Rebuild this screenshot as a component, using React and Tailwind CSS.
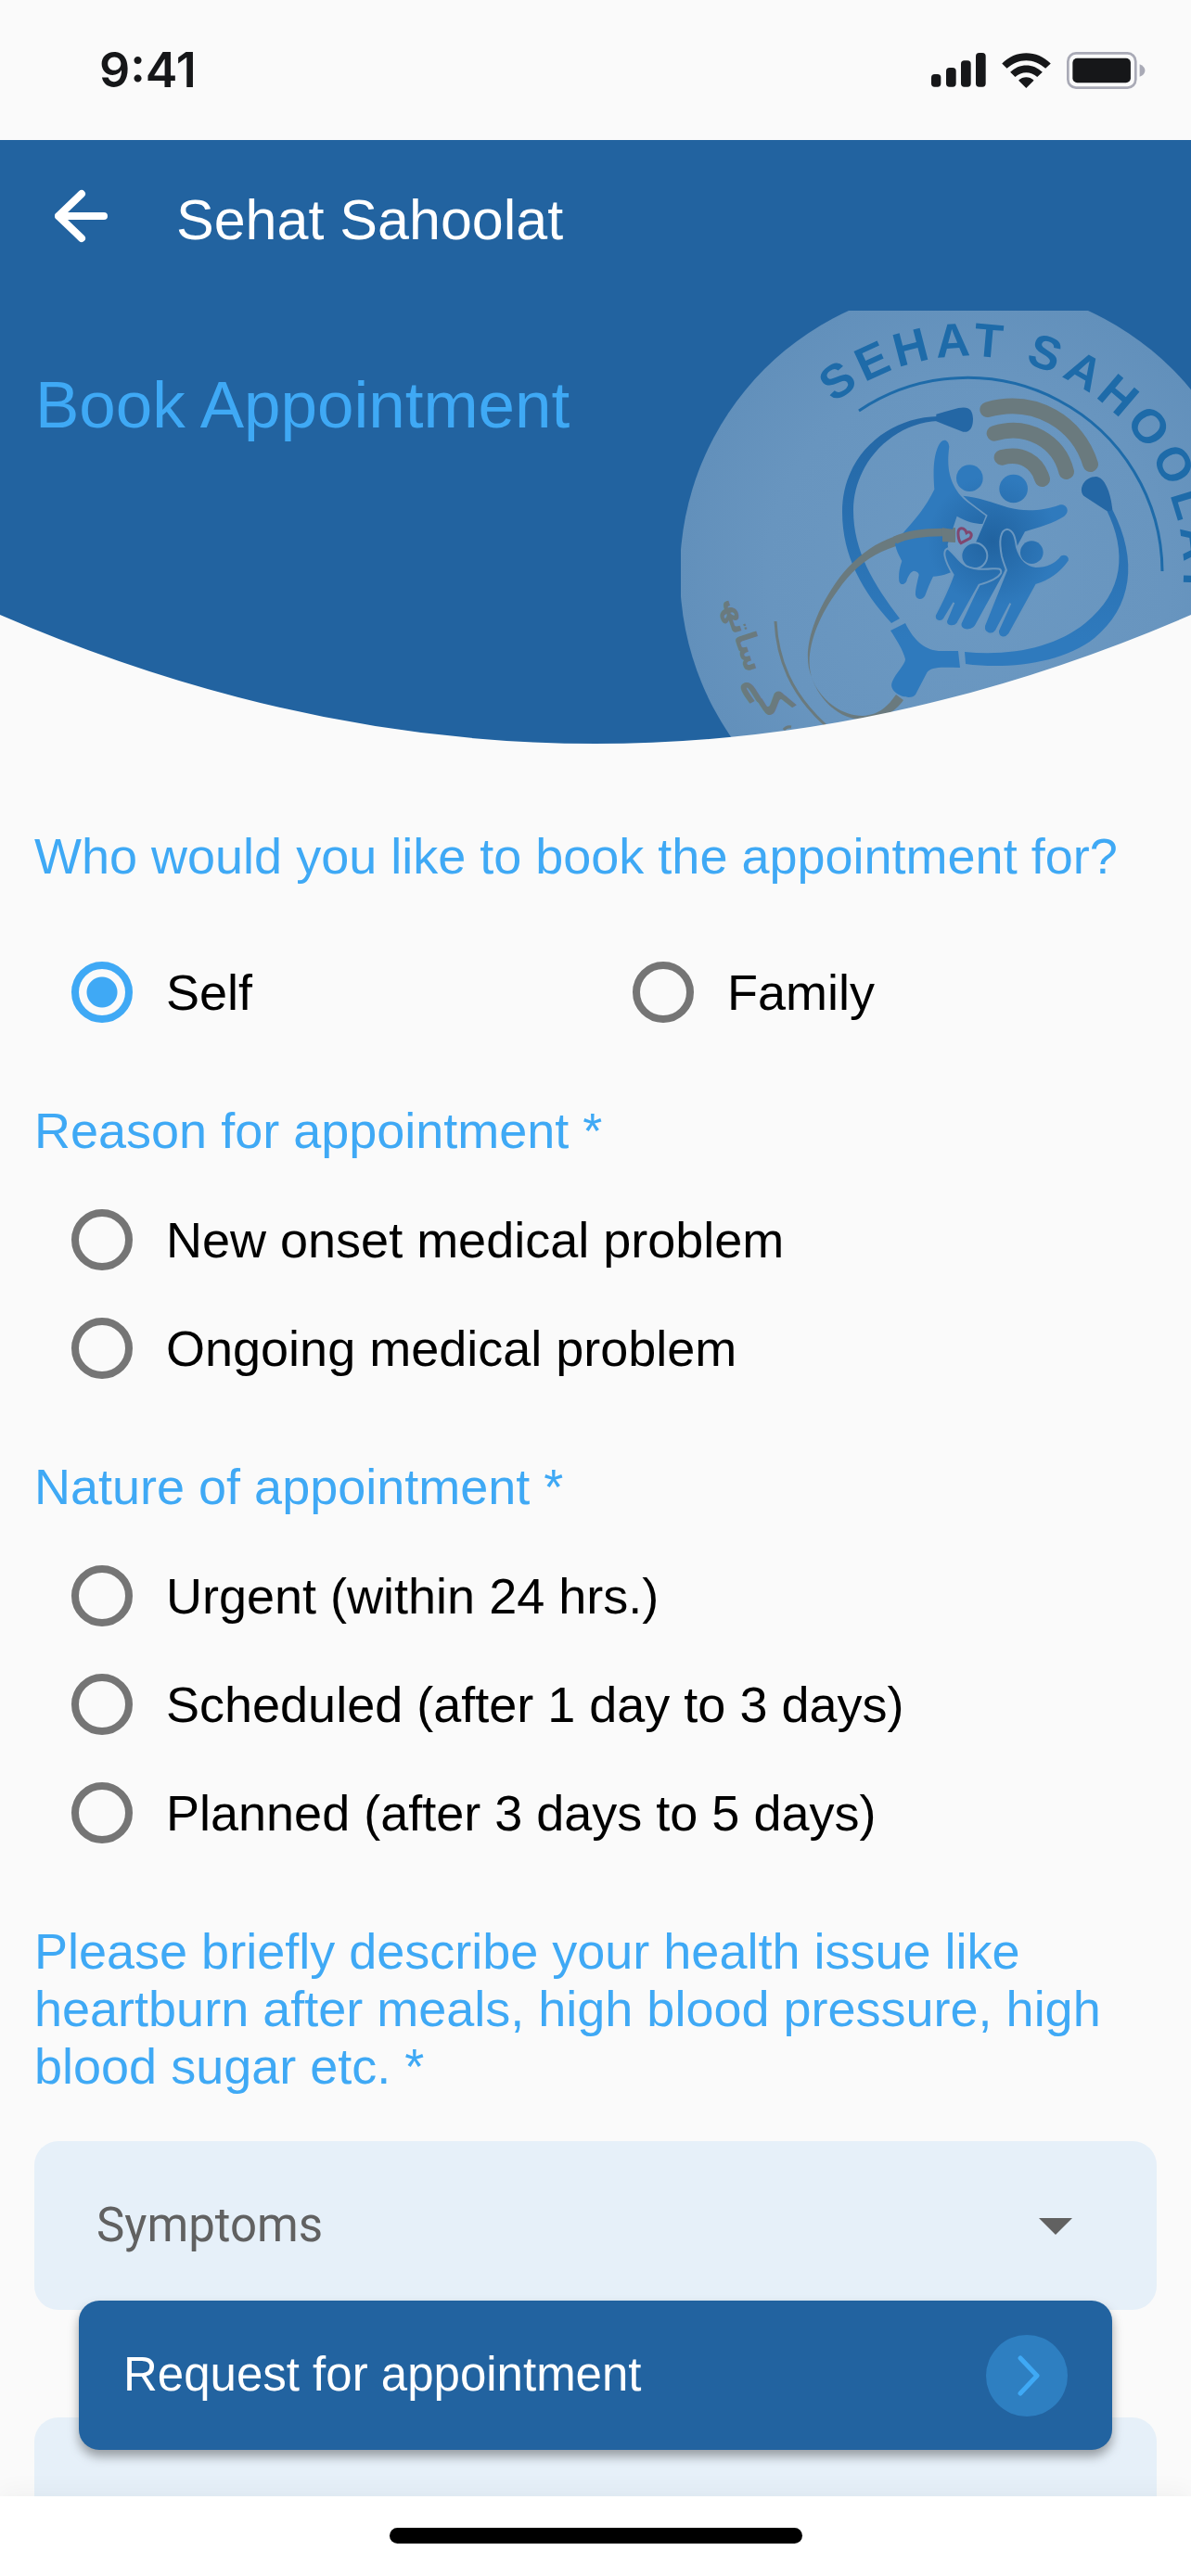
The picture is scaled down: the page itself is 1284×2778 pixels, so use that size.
import { useState } from "react";

const reasons = ["New onset medical problem", "Ongoing medical problem"];

const natures = ["Urgent (within 24 hrs.)", "Scheduled (after 1 day to 3 days)", "Planned (after 3 days to 5 days)"];

// letters of the round seal with their angle on the circle
const sealLetters = [
    ["S", -34.5],
    ["E", -24.6],
    ["H", -14.5],
    ["A", -3.9],
    ["T", 5],
    ["S", 19.4],
    ["A", 30],
    ["H", 40.4],
    ["O", 51.2],
    ["O", 62.5],
    ["L", 73],
    ["A", 83],
    ["T", 92],
];

const StatusBar = () => (
    <div className="flex h-[151px] shrink-0 items-center justify-between pl-[107px] pr-[49px]">
        <span className="font-[Inter,sans-serif] text-[52px] font-semibold leading-[62px] text-[#161719]">9:41</span>
        <div className="flex items-center gap-[17px]">
            <svg viewBox="75 80 177 111" className="h-[37px] w-[59px] fill-[#161719]">
                <rect x="75" y="149" width="31" height="41" rx="11" />
                <rect x="123" y="128" width="32" height="62" rx="11" />
                <rect x="171" y="105" width="32" height="85" rx="11" />
                <rect x="219" y="80" width="32" height="110" rx="11" />
            </svg>
            <svg viewBox="302 77 159 115" className="h-[38px] w-[53px] fill-[#161719]">
                <path d="M302 112 C345 66 417 66 461 112 L444 128 C408 93 354 93 318 128Z" />
                <path d="M329 140 C358 110 404 110 434 140 L417 156 C396 136 366 136 345 156Z" />
                <path d="M356 167 C370 153 392 153 406 167 L381 192Z" />
            </svg>
            <svg viewBox="512 75 254 119" className="h-[40px] w-[85px]">
                <rect x="516" y="79" width="218" height="111" rx="26" fill="none" stroke="#a9aab6" strokeWidth="8" />
                <rect x="531" y="95" width="187" height="79" rx="15" fill="#161719" />
                <path d="M747 114 C770 122 770 147 747 155Z" fill="#a9aab6" />
            </svg>
        </div>
    </div>
);

const Seal = () => (
    <svg viewBox="734 335 550 467" className="absolute bottom-0 right-0 h-[467px] w-[550px]" aria-hidden="true">
        <defs>
            <radialGradient id="disc">
                <stop offset="0%" stopColor="#6c99c2" />
                <stop offset="70%" stopColor="#6895bf" />
                <stop offset="100%" stopColor="#6290bb" />
            </radialGradient>
            <linearGradient id="tube" gradientUnits="userSpaceOnUse" x1="0" y1="450" x2="0" y2="690">
                <stop offset="0%" stopColor="#2467a5" />
                <stop offset="100%" stopColor="#2f7abd" />
            </linearGradient>
            <radialGradient id="people" gradientUnits="userSpaceOnUse" cx="450" cy="430" r="210">
                <stop offset="0%" stopColor="#2163a0" />
                <stop offset="100%" stopColor="#2f7abd" />
            </radialGradient>
        </defs>
        <circle cx="1044" cy="618" r="311" fill="url(#disc)" />

        <g fill="#1e6ba9" fontFamily="Liberation Sans, Arial, sans-serif" fontSize="51" fontWeight="700" textAnchor="middle">
            {sealLetters.map(([letter, angle], idx) => (
                <text key={idx} transform={`translate(1044 616) rotate(${angle})`} y="-232">
                    {letter}
                </text>
            ))}
        </g>
        <path d="M926 443 A210 210 0 0 1 1253 616" fill="none" stroke="#1e6ba9" strokeWidth="3" />

        <g fill="url(#tube)">
            <path d="M1011 449 C958 450 908 490 908 552 C908 600 930 638 961 672 L970 667 C942 630 920 595 920 550 C920 500 962 456 1011 454Z" />
            <path d="M1199 549 C1228 605 1220 655 1180 688 C1145 716 1085 722 1041 716 L1040 703 C1090 708 1138 698 1170 672 C1212 638 1215 595 1193 550Z" />
            <path d="M960 680 L976 672 C986 692 998 702 1015 702 L1033 702 L1035 720 C1020 720 1003 718 999 726 L987 749 C982 757 956 748 962 735 C965 727 976 716 976 711 C974 702 966 689 960 680Z" />
        </g>

        <g fill="#6a7a7e">
            <path d="M1019 572 C962 568 925 594 900 630 C876 665 864 705 875 730 C883 755 905 776 930 776 C950 776 965 768 974 755 L966 749 C955 765 945 771 930 772 C905 772 882 752 875 730 C867 705 880 668 903 637 C930 598 965 582 1019 582Z" />
            <path d="M1016 570 L1030 569 L1030 585 L1016 584Z" />
        </g>
        <path d="M836 670 C838 710 852 748 891 783" fill="none" stroke="#6a7a7e" strokeWidth="3" />
        <g fill="#6a7a7e" fontFamily="DejaVu Sans, sans-serif" fontWeight="700" textAnchor="middle">
            <text transform="translate(792 687) rotate(72)" fontSize="32">
                ساتھ
            </text>
            <text transform="translate(817 756) rotate(58)" fontSize="44">
                کے
            </text>
        </g>
        <path d="M845 787 Q848 783 853 784" fill="none" stroke="#6a7a7e" strokeWidth="3" />

        <g transform="translate(920 440) scale(0.3333)">
            <path d="M268 20 L340 0 C375 -6 385 5 387 35 C387 65 375 80 355 77 L268 43Z" fill="#2467a5" />
            <path d="M785 222 C812 224 832 270 838 328 C830 336 822 335 815 330 L745 284 C726 262 748 222 785 222Z" fill="#2467a5" />
            <g fill="none" stroke="#6a7a7e" strokeWidth="50" strokeLinecap="round">
                <path d="M434 5 C590 -38 727 50 767 182" />
                <path d="M456 82 C565 48 665 110 689 206" />
                <path d="M480 160 C545 143 595 175 611 230" />
            </g>
            <g fill="url(#people)">
                <circle cx="376" cy="227" r="43" />
                <circle cx="518" cy="261" r="46" />
                <path d="M295 104 C280 104 268 130 262 170 C258 200 260 240 262 263 C235 320 200 360 160 405 L135 440 C140 465 150 480 157 495 C148 520 146 540 148 560 C152 575 165 572 172 560 C178 540 188 528 196 527 C205 528 212 533 212 540 C205 570 200 590 201 605 C205 622 225 622 232 607 C240 585 248 565 258 545 C280 545 295 540 315 532 L305 440 L335 350 C365 368 395 375 418 375 L428 349 C395 322 360 302 340 275 C315 240 300 200 310 125 C308 110 302 104 295 104Z" />
                <path d="M355 284 C400 288 450 305 500 322 C560 338 620 330 665 314 C690 308 703 335 682 350 C650 372 600 385 555 400 L528 450 L480 545 L395 700 C385 722 345 720 350 697 L410 570 L395 437 L434 347 C405 325 375 305 355 284Z" />
            </g>
            <g fill="url(#people)" stroke="#6a97c0" strokeWidth="6">
                <circle cx="391" cy="478" r="42" />
                <path d="M305 454 C288 460 292 490 323 540 C305 590 285 630 264 670 C260 692 285 695 294 682 L325 630 L300 690 C300 710 327 710 337 697 L407 572 C437 564 467 552 477 535 C482 518 465 519 450 520 C420 523 390 523 365 511 C340 498 325 468 305 454Z" />
                <path d="M497 392 C475 395 470 430 480 480 C485 500 492 515 495 525 L423 705 C420 732 450 738 462 720 L508 632 L468 720 C466 744 490 750 504 732 L592 572 C642 557 672 532 698 495 C702 478 685 468 670 476 C650 503 620 513 590 513 C560 510 540 490 528 450 C524 425 520 395 497 392Z" />
            </g>
            <circle cx="577" cy="467" r="37" fill="url(#people)" />
            <path d="M135 428 C175 408 230 402 292 402" fill="none" stroke="#6a7a7e" strokeWidth="26" />
            <path d="M288 388 L326 393 L330 433 L288 433Z" fill="#6a7a7e" />
            <path
                d="M343 392 C335 400 340 430 348 437 L378 421 C388 405 375 398 366 404 C362 390 350 386 343 392Z"
                fill="none"
                stroke="#80476f"
                strokeWidth="9"
            />
        </g>
    </svg>
);

const Header = () => (
    <header className="relative min-h-[651px] shrink-0 overflow-hidden bg-[#2263a0]">
        <Seal />
        <svg viewBox="0 0 1284 139" preserveAspectRatio="none" className="absolute bottom-0 left-0 h-[139px] w-full" aria-hidden="true">
            <path d="M0 0 Q642 278 1284 0 V139 H0Z" fill="#fafafa" />
        </svg>
        <nav className="flex items-end gap-[73px] pl-[59px] pt-[50px]">
            <button type="button" aria-label="Back" className="pb-2">
                <svg
                    viewBox="0 0 58 64"
                    className="h-[64px] w-[58px]"
                    fill="none"
                    stroke="#fff"
                    strokeWidth="8"
                    strokeLinecap="round"
                    strokeLinejoin="round"
                >
                    <path d="M29 8 L4 32 L29 56 M4 32 H53" />
                </svg>
            </button>
            <span className="text-[61px] leading-[72px] text-white">Sehat Sahoolat</span>
        </nav>
        <h1 className="mt-[122px] pl-[38px] text-[71px] leading-[84px] text-[#3fa9f5]">Book Appointment</h1>
    </header>
);

const RadioOption = ({ name, label, checked, onChange }) => (
    <label className="flex h-[117px] items-center gap-9 pl-10 text-black">
        <input
            type="radio"
            name={name}
            checked={checked}
            onChange={onChange}
            className="size-[66px] shrink-0 appearance-none rounded-full border-8 border-[#757575] checked:border-[#3fa9f5] checked:bg-[radial-gradient(circle,#3fa9f5_16px,transparent_17px)]"
        />
        {label}
    </label>
);

const RadioGroup = ({ name, title, options, value, onChange }) => (
    <fieldset>
        <legend className="mb-7 text-[#3fa9f5]">{title}</legend>
        {options.map((option) => (
            <RadioOption
                key={option}
                name={name}
                label={option}
                checked={value === option}
                onChange={() => onChange(option)}
            />
        ))}
    </fieldset>
);

const App = () => {
    const [person, setPerson] = useState("Self");
    const [reason, setReason] = useState("");
    const [nature, setNature] = useState("");

    return (
        <div className="flex h-screen flex-col bg-[#fafafa] font-['Liberation_Sans',Arial,sans-serif]">
            <StatusBar />
            <Header />

            <main className="relative min-h-0 flex-1">
                <form
                    id="appointment"
                    className="flex h-full flex-col gap-[60px] overflow-y-auto px-[37px] pt-[90px] text-[54px] leading-[62px] [scrollbar-width:none]"
                >
                    <fieldset>
                        <legend className="mb-[57px] text-[#3fa9f5]">Who would you like to book the appointment for?</legend>
                        <div className="grid grid-cols-2">
                            {["Self", "Family"].map((option) => (
                                <RadioOption
                                    key={option}
                                    name="person"
                                    label={option}
                                    checked={person === option}
                                    onChange={() => setPerson(option)}
                                />
                            ))}
                        </div>
                    </fieldset>

                    <RadioGroup
                        name="reason"
                        title="Reason for appointment *"
                        options={reasons}
                        value={reason}
                        onChange={setReason}
                    />
                    <RadioGroup
                        name="nature"
                        title="Nature of appointment *"
                        options={natures}
                        value={nature}
                        onChange={setNature}
                    />

                    <div>
                        <label
                            htmlFor="symptoms"
                            className="block text-[#3fa9f5]"
                        >
                            Please briefly describe your health issue like heartburn after meals, high blood pressure, high blood sugar etc. *
                        </label>
                        <div className="relative mt-[50px]">
                            <select
                                id="symptoms"
                                className="h-[182px] w-full appearance-none rounded-[26px] bg-[#e6f0f9] pl-[67px] font-[Roboto,sans-serif] text-[51px] text-[#616161]"
                            >
                                <option>Symptoms</option>
                            </select>
                            <svg viewBox="0 0 36 18" className="pointer-events-none absolute right-[91px] top-[83px] h-[18px] w-[36px] fill-[#616161]">
                                <path d="M0 0 H36 L18 18Z" />
                            </svg>
                        </div>
                        <input
                            type="text"
                            aria-label="Details"
                            className="mt-[116px] block h-[182px] w-full rounded-[26px] bg-[#e6f0f9] px-[67px]"
                        />
                    </div>
                </form>

                <button
                    type="submit"
                    form="appointment"
                    className="absolute inset-x-[85px] bottom-[50px] flex h-[161px] items-center justify-between rounded-[22px] bg-[#2263a0] pl-12 pr-12 text-[51px] text-white shadow-[0_7px_12px_rgba(0,0,0,0.35)]"
                >
                    Request for appointment
                    <span className="flex size-[88px] items-center justify-center rounded-full bg-[#2e7fc1]">
                        <svg
                            viewBox="0 0 26 44"
                            className="ml-1 h-[44px] w-[26px]"
                            fill="none"
                            stroke="#3fa9f5"
                            strokeWidth="5"
                            strokeLinecap="round"
                            strokeLinejoin="round"
                        >
                            <path d="M4 3 L22 22 L4 41" />
                        </svg>
                    </span>
                </button>
            </main>

            <footer className="relative flex h-[86px] shrink-0 justify-center bg-white pt-[34px] shadow-[0_-6px_24px_rgba(0,0,0,0.04)]">
                <div className="h-[17px] w-[445px] rounded-full bg-black" />
            </footer>
        </div>
    );
};

export default App;
